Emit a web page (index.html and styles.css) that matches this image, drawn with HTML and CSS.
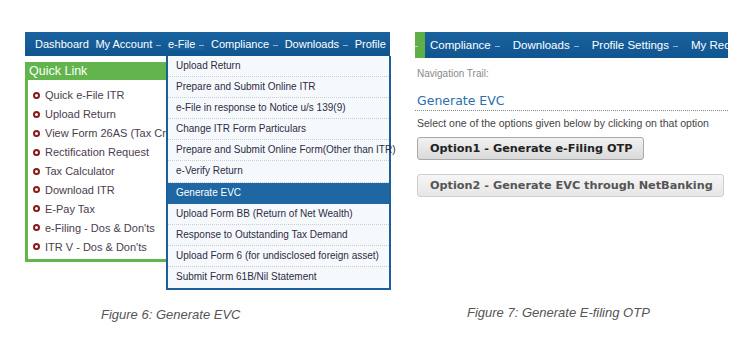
FILE: index.html
```html
<!DOCTYPE html>
<html>
<head>
<meta charset="utf-8">
<link rel="stylesheet" href="styles.css">
</head>
<body>
<div class="page">
  <div class="fig fig-left">
    <div class="nav nav-left">
      <span class="nav-item">Dashboard</span>
      <span class="nav-item">My Account <i class="caret"></i></span>
      <span class="nav-item active">e-File <i class="caret"></i></span>
      <span class="nav-item">Compliance <i class="caret"></i></span>
      <span class="nav-item">Downloads <i class="caret"></i></span>
      <span class="nav-item">Profile</span>
    </div>
    <div class="stage">
      <div class="quick">
        <div class="quick-head">Quick Link</div>
        <ul class="quick-list">
          <li><span class="dot"></span>Quick e-File ITR</li>
          <li><span class="dot"></span>Upload Return</li>
          <li><span class="dot"></span>View Form 26AS (Tax Credit)</li>
          <li><span class="dot"></span>Rectification Request</li>
          <li><span class="dot"></span>Tax Calculator</li>
          <li><span class="dot"></span>Download ITR</li>
          <li><span class="dot"></span>E-Pay Tax</li>
          <li><span class="dot"></span>e-Filing - Dos &amp; Don'ts</li>
          <li><span class="dot"></span>ITR V - Dos &amp; Don'ts</li>
        </ul>
      </div>
      <ul class="menu">
        <li>Upload Return</li>
        <li>Prepare and Submit Online ITR</li>
        <li>e-File in response to Notice u/s 139(9)</li>
        <li>Change ITR Form Particulars</li>
        <li>Prepare and Submit Online Form(Other than ITR)</li>
        <li>e-Verify Return</li>
        <li class="sel">Generate EVC</li>
        <li>Upload Form BB (Return of Net Wealth)</li>
        <li>Response to Outstanding Tax Demand</li>
        <li>Upload Form 6 (for undisclosed foreign asset)</li>
        <li>Submit Form 61B/Nil Statement</li>
      </ul>
    </div>
    <div class="caption cap-left">Figure 6: Generate EVC</div>
  </div>

  <div class="fig fig-right">
    <div class="nav nav-right">
      <span class="green-tab"><i class="caret"></i></span>
      <span class="nav-item">Compliance <i class="caret"></i></span>
      <span class="nav-item">Downloads <i class="caret"></i></span>
      <span class="nav-item">Profile Settings <i class="caret"></i></span>
      <span class="nav-item">My Requests</span>
    </div>
    <div class="trail">Navigation Trail:</div>
    <h2 class="title">Generate EVC</h2>
    <p class="hint">Select one of the options given below by clicking on that option</p>
    <div class="btn btn-1">Option1 - Generate e-Filing OTP</div>
    <div class="btn btn-2">Option2 - Generate EVC through NetBanking</div>
    <div class="caption cap-right">Figure 7: Generate E-filing OTP</div>
  </div>
</div>
</body>
</html>
```
FILE: styles.css
```css
* { box-sizing: border-box; }
html, body { margin: 0; padding: 0; background: #fff; }
body { font-family: "Liberation Sans", Arial, sans-serif; }

.page {
  display: flex;
  gap: 25px;
  padding: 32px 0 0 25px;
}

.fig { display: flex; flex-direction: column; }
.fig-left { width: 365px; }
.fig-right { width: 313px; overflow: hidden; }

.nav {
  display: flex;
  align-items: center;
  background: linear-gradient(#1a639f, #0f5590);
  color: #fff;
  white-space: nowrap;
  overflow: hidden;
}
.nav-left { height: 24px; padding-left: 10px; gap: 6.6px; font-size: 11px; }
.nav-right { height: 26px; gap: 13px; font-size: 11.5px; }

.nav-item { display: inline-flex; align-items: center; gap: 4px; }
.nav-item.active { background: #17609c; }

.caret {
  display: inline-block;
  width: 5px;
  height: 1px;
  background: #8fb2d0;
  margin-top: 3px;
}

.green-tab {
  width: 10px;
  height: 100%;
  background: #5fae47;
  display: flex;
  align-items: center;
  justify-content: flex-start;
  margin-right: -8px;
  flex: none;
}
.green-tab .caret { width: 3px; background: #b9d8ac; }

.stage { position: relative; height: 234px; }

.quick {
  margin-top: 6px;
  width: 190px;
  height: 200px;
  border: 3px solid #62b44c;
  border-top: 0;
  background: #fff;
}
.quick-head {
  background: #62b44c;
  color: #fff;
  font-size: 12.5px;
  height: 18px;
  line-height: 18px;
  margin: 0 -3px;
  padding-left: 4px;
}
.quick-list {
  list-style: none;
  margin: 0;
  padding: 6px 0 0 5px;
  font-size: 11px;
  color: #4b3d4e;
}
.quick-list li {
  display: flex;
  align-items: center;
  height: 18.9px;
  white-space: nowrap;
}
.dot {
  width: 7px;
  height: 7px;
  border-radius: 50%;
  border: 2.3px solid #8b1a1a;
  margin-right: 5px;
  flex: none;
}

.menu {
  position: absolute;
  top: 0;
  left: 141px;
  width: 225px;
  height: 234px;
  margin: 0;
  padding: 0;
  list-style: none;
  background: #f6f9fc;
  border: 2px solid #1d5f98;
  border-top: 0;
  font-size: 10px;
  color: #2d2b45;
}
.menu li {
  height: 21.1px;
  line-height: 20px;
  padding-left: 8px;
  border-bottom: 1px dotted #c9ced6;
  white-space: nowrap;
}
.menu li:last-child { border-bottom: 0; }
.menu li.sel { background: #1e67a3; color: #fff; border-bottom-color: #1e67a3; }

.caption {
  font-style: italic;
  font-size: 13px;
  color: #555;
}
.cap-left { margin: 17px 0 0 76px; }
.cap-right { margin: 108px 0 0 52px; }

.trail {
  margin-top: 10px;
  padding-left: 2px;
  font-size: 10px;
  color: #8a8a8a;
}
.title {
  margin: 14px 0 0;
  padding: 0 0 2px 2px;
  font-family: "DejaVu Sans", sans-serif;
  font-weight: normal;
  font-size: 12.5px;
  color: #2a6fad;
  border-bottom: 1px dotted #888;
}
.hint {
  margin: 6px 0 0;
  padding-left: 2px;
  font-size: 10.5px;
  color: #444;
}
.btn {
  align-self: flex-start;
  margin-left: 2px;
  height: 23px;
  line-height: 21px;
  padding: 0 10px 0 12px;
  border: 1px solid #a9a9a9;
  border-radius: 3px;
  font-family: "DejaVu Sans", sans-serif;
  font-weight: bold;
  font-size: 11.25px;
  white-space: nowrap;
}
.btn-1 {
  margin-top: 8px;
  background: linear-gradient(#f2f2f2, #d9d9d9);
  color: #222;
}
.btn-2 {
  margin-top: 14px;
  background: linear-gradient(#f6f6f6, #e6e6e6);
  border-color: #cfcfcf;
  color: #555;
}
```
